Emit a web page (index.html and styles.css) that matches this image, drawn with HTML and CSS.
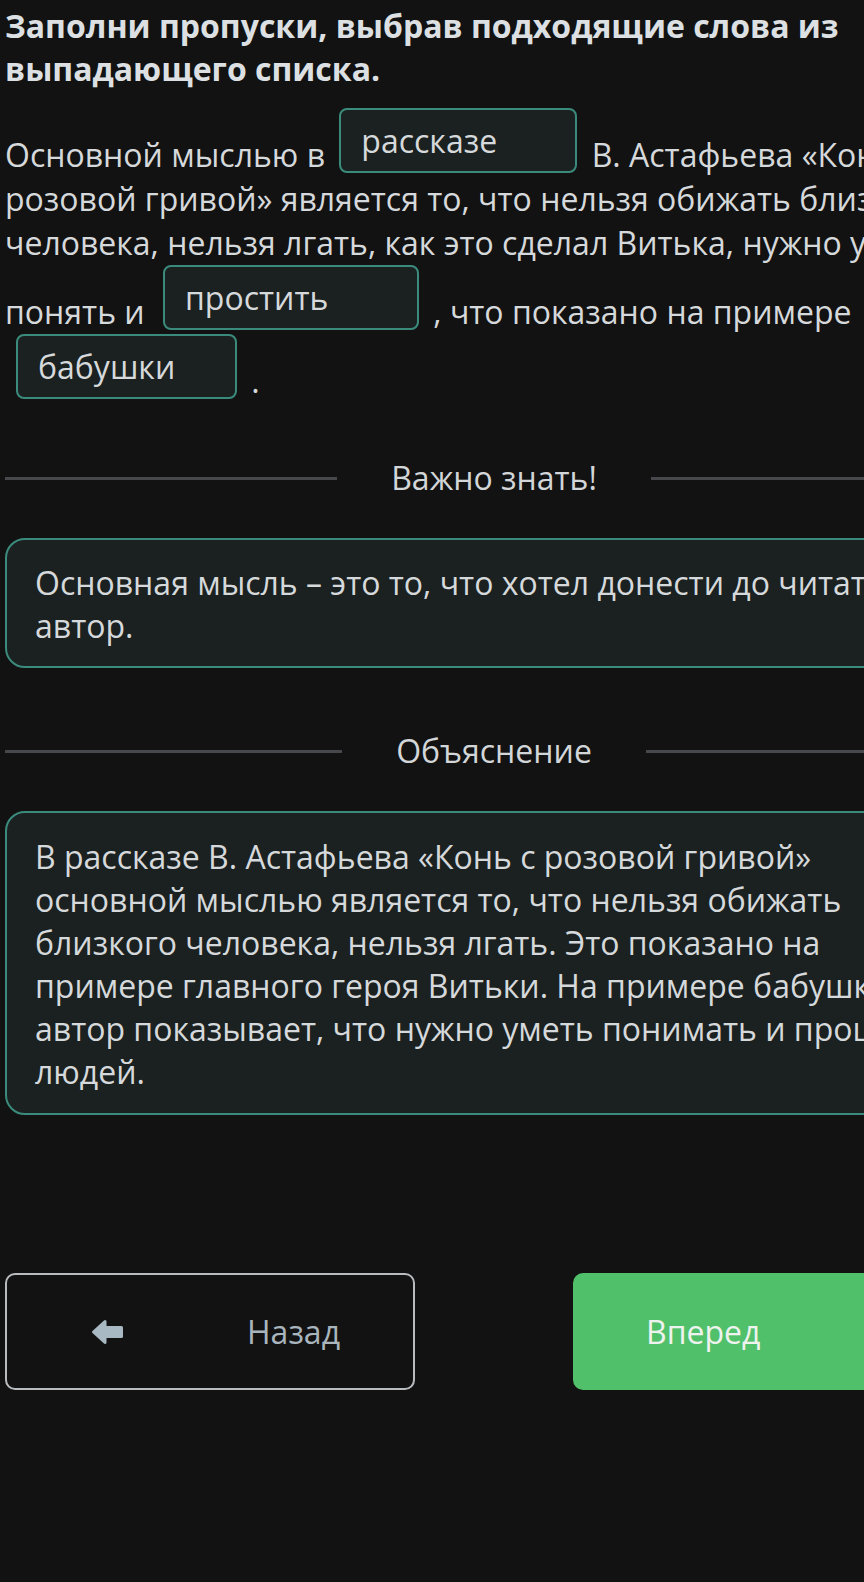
FILE: index.html
```html
<!DOCTYPE html>
<html lang="ru">
<head>
    <meta charset="UTF-8">
    <meta name="viewport" content="width=device-width, initial-scale=1.0">
    <title>Заполни пропуски</title>
    <link rel="stylesheet" href="styles.css">
</head>
<body>
    <div class="page">
        <h1 class="task-title">Заполни пропуски, выбрав подходящие слова из выпадающего списка.</h1>

        <p class="task-text">
            Основной мыслью в <span class="blank blank-story">рассказе</span> В. Астафьева «Конь с розовой гривой» является то, что нельзя обижать близкого человека, нельзя лгать, как это сделал Витька, нужно уметь понять и <span class="blank blank-forgive">простить</span> , что показано на примере <span class="blank blank-granny">бабушки</span> .
        </p>

        <div class="divider">
            <span class="divider-line"></span>
            <span class="divider-text">Важно знать!</span>
            <span class="divider-line"></span>
        </div>

        <div class="note-card">
            Основная мысль – это то, что хотел донести до читателя автор.
        </div>

        <div class="divider divider--second">
            <span class="divider-line"></span>
            <span class="divider-text">Объяснение</span>
            <span class="divider-line"></span>
        </div>

        <div class="note-card note-card--explain">
            В рассказе В. Астафьева «Конь с розовой гривой» основной мыслью является то, что нельзя обижать близкого человека, нельзя лгать. Это показано на примере главного героя Витьки. На примере бабушки автор показывает, что нужно уметь понимать и прощать людей.
        </div>

        <div class="nav-buttons">
            <button class="nav-btn nav-btn--back">
                <svg class="nav-icon" viewBox="0 0 33 26" aria-hidden="true">
                    <path d="M2.5 13 L14 2.5 V8.5 H30.5 V17.5 H14 V23.5 Z"/>
                </svg>
                <span class="nav-label">Назад</span>
            </button>
            <button class="nav-btn nav-btn--next">
                <span class="nav-label">Вперед</span>
                <svg class="nav-icon" viewBox="0 0 33 26" aria-hidden="true">
                    <path d="M30.5 13 L19 2.5 V8.5 H2.5 V17.5 H19 V23.5 Z"/>
                </svg>
            </button>
        </div>
    </div>
</body>
</html>
```

FILE: styles.css
```css
* {
    margin: 0;
    padding: 0;
    box-sizing: border-box;
}

html,
body {
    background: #121212;
    overflow: hidden;
}

body {
    font-family: 'Open Sans', 'Noto Sans', sans-serif;
    color: #d6d9db;
    min-height: 100vh;
}

.page {
    width: 978px;
    margin-left: 5px;
    padding-top: 4px;
}

.task-title {
    font-size: 32px;
    font-weight: 700;
    line-height: 43px;
    color: #dde0e2;
}

.task-text {
    margin-top: 18px;
    font-size: 32px;
    line-height: 44px;
}

.blank {
    display: inline-block;
    height: 65px;
    line-height: 61px;
    padding: 0 20px;
    margin: 0 6px;
    vertical-align: 14px;
    background: #1b2120;
    border: 2px solid #3b8b7c;
    border-radius: 8px;
    color: #d6d9db;
}

.blank-story {
    width: 238px;
}

.blank-forgive {
    width: 256px;
    margin-left: 10px;
}

.blank-granny {
    width: 221px;
    margin-left: 11px;
}

.divider {
    display: flex;
    align-items: center;
    gap: 54px;
    margin-top: 53px;
}

.divider--second {
    margin-top: 61px;
}

.divider-line {
    flex: 1;
    height: 3px;
    background: #46484b;
}

.divider-text {
    font-size: 32px;
    line-height: 44px;
    color: #d3d6d8;
}

.note-card {
    margin-top: 38px;
    width: 970px;
    padding: 21px 28px 19px;
    font-size: 32px;
    line-height: 43px;
    background: #1b2120;
    border: 2px solid #3b8b7c;
    border-radius: 20px;
}

.note-card--explain {
    padding-top: 22px;
    padding-bottom: 20px;
}

.nav-buttons {
    display: flex;
    justify-content: space-between;
    margin-top: 158px;
}

.nav-btn {
    display: flex;
    align-items: center;
    width: 410px;
    height: 117px;
    border-radius: 10px;
    font-family: inherit;
    font-size: 32px;
    cursor: pointer;
}

.nav-btn--back {
    background: transparent;
    border: 2px solid #b8bcbf;
    color: #a9b5bd;
    padding-left: 84px;
    gap: 123px;
}

.nav-btn--next {
    background: #51c06a;
    border: none;
    color: #eef3ef;
    padding-left: 73px;
    gap: 104px;
}

.nav-icon {
    width: 33px;
    height: 26px;
    fill: #a9b9c3;
    stroke: #a9b9c3;
    stroke-width: 3;
    stroke-linejoin: round;
}

.nav-btn--next .nav-icon {
    fill: #eef3ef;
    stroke: #eef3ef;
}
```
